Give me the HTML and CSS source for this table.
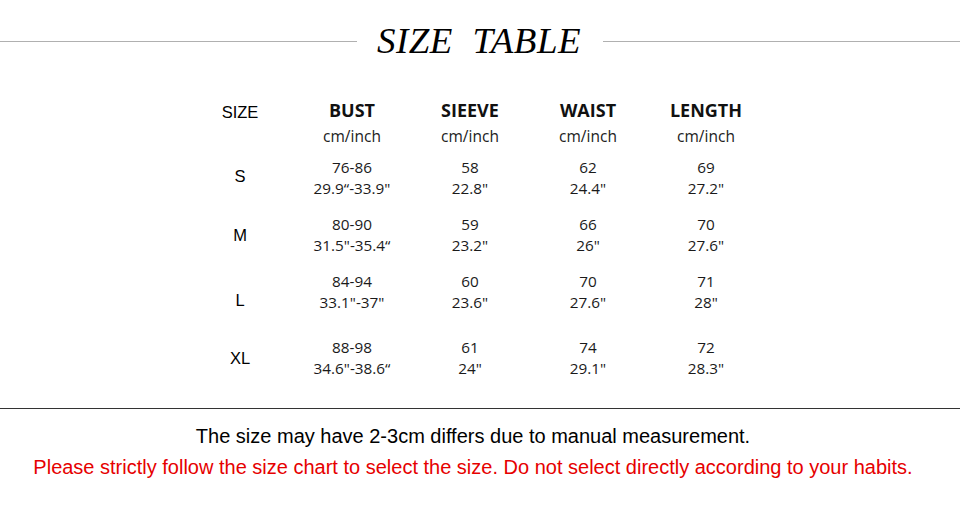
FILE: index.html
```html
<!DOCTYPE html>
<html>
<head>
<meta charset="utf-8">
<link rel="stylesheet" href="styles.css">
</head>
<body>
<div class="page">
  <header class="title-bar">
    <span class="rule"></span>
    <h1 class="title">SIZE&nbsp; TABLE</h1>
    <span class="rule"></span>
  </header>

  <section class="chart">
    <div class="row head">
      <div class="cell size-label">SIZE</div>
      <div class="cell col-head">BUST</div>
      <div class="cell col-head">SIEEVE</div>
      <div class="cell col-head">WAIST</div>
      <div class="cell col-head">LENGTH</div>
    </div>
    <div class="row units">
      <div class="cell"></div>
      <div class="cell unit">cm/inch</div>
      <div class="cell unit">cm/inch</div>
      <div class="cell unit">cm/inch</div>
      <div class="cell unit">cm/inch</div>
    </div>

    <div class="row data r1">
      <div class="cell size-label up">S</div>
      <div class="cell val"><span>76-86</span><span>29.9“-33.9"</span></div>
      <div class="cell val"><span>58</span><span>22.8"</span></div>
      <div class="cell val"><span>62</span><span>24.4"</span></div>
      <div class="cell val"><span>69</span><span>27.2"</span></div>
    </div>
    <div class="row data r2">
      <div class="cell size-label">M</div>
      <div class="cell val"><span>80-90</span><span>31.5"-35.4“</span></div>
      <div class="cell val"><span>59</span><span>23.2"</span></div>
      <div class="cell val"><span>66</span><span>26"</span></div>
      <div class="cell val"><span>70</span><span>27.6"</span></div>
    </div>
    <div class="row data r3">
      <div class="cell size-label low">L</div>
      <div class="cell val"><span>84-94</span><span>33.1"-37"</span></div>
      <div class="cell val"><span>60</span><span>23.6"</span></div>
      <div class="cell val"><span>70</span><span>27.6"</span></div>
      <div class="cell val"><span>71</span><span>28"</span></div>
    </div>
    <div class="row data r4">
      <div class="cell size-label">XL</div>
      <div class="cell val"><span>88-98</span><span>34.6"-38.6“</span></div>
      <div class="cell val"><span>61</span><span>24"</span></div>
      <div class="cell val"><span>74</span><span>29.1"</span></div>
      <div class="cell val"><span>72</span><span>28.3"</span></div>
    </div>
  </section>

  <footer class="notes">
    <p class="note">The size may have 2-3cm differs due to manual measurement.</p>
    <p class="note warn">Please strictly follow the size chart to select the size. Do not select directly according to your habits.</p>
  </footer>
</div>
</body>
</html>
```

FILE: styles.css
```css
* { box-sizing: border-box; }
html, body { margin: 0; padding: 0; background: #fff; }
body { width: 960px; height: 506px; overflow: hidden; }

.page { width: 960px; }

.title-bar {
  display: flex;
  align-items: center;
  height: 82px;
}
.rule {
  flex: 1;
  height: 1px;
  background: #b0b0b0;
}
.title {
  margin: 0 22px 0 20px;
  font-family: "Liberation Serif", "DejaVu Serif", serif;
  font-style: italic;
  font-weight: normal;
  font-size: 37px;
  letter-spacing: 0.5px;
  color: #000;
  line-height: 1;
  transform: scaleY(0.95);
}

.chart {
  padding-left: 187px;
  padding-top: 16px;
}
.row {
  display: grid;
  grid-template-columns: 106px 118px 118px 118px 118px;
  align-items: center;
}
.cell { text-align: center; }

.head { height: 24px; }
.units { height: 24px; margin-top: 2px; }

.size-label {
  font-family: "Liberation Sans", Arial, sans-serif;
  font-size: 16.5px;
  color: #000;
}
.head .size-label { padding-top: 4px; }
.col-head {
  font-family: "Open Sans", sans-serif;
  font-weight: bold;
  font-size: 18px;
  color: #111;
}
.unit {
  font-family: "Open Sans", sans-serif;
  font-size: 15.5px;
  color: #222;
}

.data { height: 42px; }
.r1 { margin-top: 9px; }
.r2 { margin-top: 15px; }
.r3 { margin-top: 15px; }
.r4 { margin-top: 24px; }

.val {
  display: flex;
  flex-direction: column;
  align-items: center;
  font-family: "Open Sans", sans-serif;
  font-size: 15.3px;
  line-height: 21px;
  color: #1a1a1a;
}
.data .size-label { padding-top: 0; }
.data .size-label.up { padding-bottom: 4px; }
.data .size-label.low { padding-top: 16px; }

.notes {
  margin-top: 29px;
  border-top: 1px solid #333;
  padding: 15px 14px 0 0;
  text-align: center;
}
.note {
  margin: 0;
  font-family: "Liberation Sans", Arial, sans-serif;
  font-size: 20px;
  line-height: 24px;
  color: #000;
}
.warn {
  margin-top: 7px;
  color: #e60000;
}
```
